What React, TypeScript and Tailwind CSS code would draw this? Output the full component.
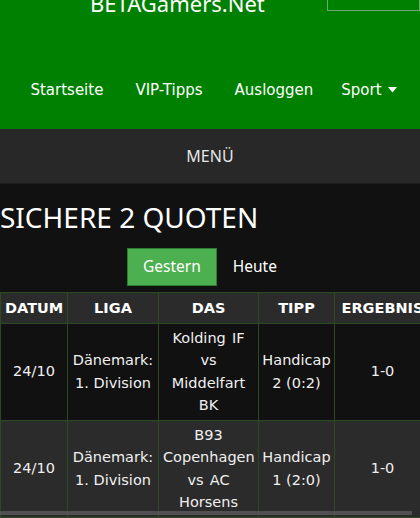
import React from "react"

const rows = [
  { date: "24/10", league: "Dänemark: 1. Division", match: "Kolding IF vs Middelfart BK", tip: "Handicap 2 (0:2)", result: "1-0" },
  { date: "24/10", league: "Dänemark: 1. Division", match: "B93 Copenhagen vs AC Horsens", tip: "Handicap 1 (2:0)", result: "1-0" },
]

const navItems = ["Startseite", "VIP-Tipps", "Ausloggen"]

export default function App() {
  return (
    <div className="min-h-[518px] bg-[#111111] text-white overflow-hidden relative">
      {/* header */}
      <div className="bg-[#008000] h-[129px]">
        <div className="flex items-start h-[12px]">
          <div className="ml-[90px] -mt-[8px] text-[22px] leading-none text-white" style={{ fontFamily: '"Noto Sans", sans-serif' }}>
            BETAGamers.Net
          </div>
          <div className="ml-auto -mt-[30px] w-[93px] h-[41px] border border-[#6fa86f]" />
        </div>
        <nav className="mt-[67px] h-[22px] pl-[7px] flex justify-center text-[15px] leading-[22px]" style={{ fontFamily: '"DejaVu Sans", sans-serif' }}>
          {navItems.map((item) => (
            <a key={item} className="px-4">
              {item}
            </a>
          ))}
          <a className="pl-[12px] pr-4 flex items-center gap-[6px]">
            Sport
            <svg width="9" height="6" viewBox="0 0 9 6">
              <path d="M0 0 H9 L4.5 5.5 Z" fill="white" />
            </svg>
          </a>
        </nav>
      </div>

      {/* menu bar */}
      <div className="h-[55px] bg-[#282828] border-b border-[#1c1c1c] flex items-center justify-center text-[16px] text-[#e6e6e6]" style={{ fontFamily: '"Noto Sans", sans-serif' }}>
        MENÜ
      </div>

      <div style={{ fontFamily: '"Noto Sans", sans-serif' }}>
        <h1 className="mt-[14px] text-[28px] leading-[38px] font-normal">SICHERE 2 QUOTEN</h1>
        <div className="mt-[12px] flex justify-center text-[15.5px]">
          <button className="h-[38px] px-[15px] bg-[#4caf50] border border-[#2e7d32] text-white">Gestern</button>
          <button className="h-[38px] px-[16px] text-white">Heute</button>
        </div>
      </div>

      {/* table */}
      <div className="mt-[6px] overflow-hidden">
        <table className="table-fixed border-collapse w-[430px] text-[14.5px] leading-[22.5px] text-center text-[#f0f0f0]" style={{ fontFamily: '"DejaVu Sans", sans-serif' }}>
          <colgroup>
            <col className="w-[67px]" />
            <col className="w-[91px]" />
            <col className="w-[100px]" />
            <col className="w-[76px]" />
            <col className="w-[96px]" />
          </colgroup>
          <thead>
            <tr className="bg-[#2b2b2b]">
              {["DATUM", "LIGA", "DAS", "TIPP", "ERGEBNIS"].map((h) => (
                <th key={h} className="border border-[#2b4a23] py-[3.5px] px-1 font-bold text-white whitespace-nowrap">
                  {h}
                </th>
              ))}
            </tr>
          </thead>
          <tbody>
            {rows.map((r, i) => (
              <tr key={i} className={i % 2 === 0 ? "bg-[#111111]" : "bg-[#2b2b2b]"}>
                <td className="border border-[#2b4a23] py-[3px] px-1">{r.date}</td>
                <td className="border border-[#2b4a23] py-[3px] px-1">{r.league}</td>
                <td className="border border-[#2b4a23] py-[3px] px-1 [word-spacing:1.5px]">{r.match}</td>
                <td className="border border-[#2b4a23] py-[3px] px-[2px]">{r.tip}</td>
                <td className="border border-[#2b4a23] py-[3px] px-1">{r.result}</td>
              </tr>
            ))}
          </tbody>
        </table>
      </div>

      {/* horizontal scrollbar overlay */}
      <div className="absolute left-0 top-[511px] w-[412px] h-[4px] bg-[#5a5a5a]/80" />
    </div>
  )
}
